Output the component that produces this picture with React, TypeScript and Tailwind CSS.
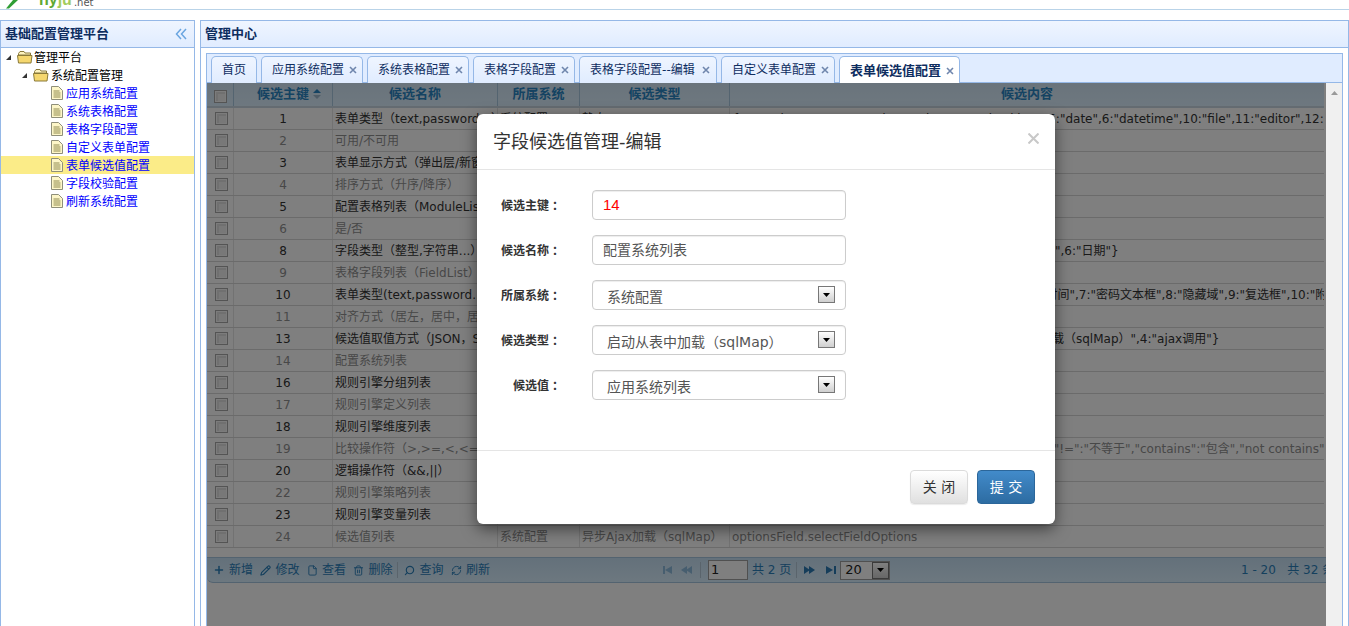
import { Plus, Pencil, File, Trash2, Search, RefreshCw } from "lucide-react";

type Row = { id: number; name: string; system?: string; type?: string; content?: string };

const rows: Row[] = [
  { id: 1, name: "表单类型（text,password...）", system: "系统配置", type: "静态JSON", content: '{1:"textbox",2:"password",3:"select2",4:"checkbox",5:"date",6:"datetime",10:"file",11:"editor",12:"auto"}' },
  { id: 2, name: "可用/不可用" },
  { id: 3, name: "表单显示方式（弹出层/新窗口）" },
  { id: 4, name: "排序方式（升序/降序）" },
  { id: 5, name: "配置表格列表（ModuleList）" },
  { id: 6, name: "是/否" },
  { id: 8, name: "字段类型（整型,字符串...）", content: '{1:"整型",2:"字符串",3:"长整型",4:"浮点型",5:"日期时间型",6:"日期"}' },
  { id: 9, name: "表格字段列表（FieldList）" },
  { id: 10, name: "表单类型(text,password...）", content: '{1:"文本框",2:"下拉框",3:"单选框",4:"日期",5:"日期",6:"时间",7:"密码文本框",8:"隐藏域",9:"复选框",10:"附件"}' },
  { id: 11, name: "对齐方式（居左，居中，居右）" },
  { id: 13, name: "候选值取值方式（JSON，SqlMap）", content: '{1:"JSON",2:"启动从表中加载（sqlMap）",3:"异步Ajax加载（sqlMap）",4:"ajax调用"}' },
  { id: 14, name: "配置系统列表" },
  { id: 16, name: "规则引擎分组列表" },
  { id: 17, name: "规则引擎定义列表" },
  { id: 18, name: "规则引擎维度列表" },
  { id: 19, name: "比较操作符（>,>=,<,<=...）", content: '{">":"大于等于","<":"小于","<=":"小于等于","=":"等于","!=":"不等于","contains":"包含","not contains":"不包含"}' },
  { id: 20, name: "逻辑操作符（&&,||）" },
  { id: 22, name: "规则引擎策略列表" },
  { id: 23, name: "规则引擎变量列表" },
  { id: 24, name: "候选值列表", system: "系统配置", type: "异步Ajax加载（sqlMap）", content: "optionsField.selectFieldOptions" },
];

const tabs = ["应用系统配置", "系统表格配置", "表格字段配置", "表格字段配置--编辑", "自定义表单配置"];
const leaves = ["应用系统配置", "系统表格配置", "表格字段配置", "自定义表单配置", "表单候选值配置", "字段校验配置", "刷新系统配置"];

function TreeArrow() {
  return (
    <svg width="7" height="7" viewBox="0 0 7 7" className="shrink-0">
      <path d="M6 1v5H1z" fill="#333" />
    </svg>
  );
}

function FolderIcon() {
  return (
    <svg width="16" height="14" viewBox="0 0 16 14" className="shrink-0">
      <path d="M1.5 3.5 3 1.5h4l1 1.5h5.5v2h-12z" fill="#fdf3c0" stroke="#8a7a3a" />
      <path d="M.5 5.5h14.5l-1 7.5H1.5z" fill="#f5d76e" stroke="#8a7a3a" />
    </svg>
  );
}

function LeafIcon() {
  return (
    <svg width="12" height="14" viewBox="0 0 12 14" className="shrink-0">
      <path d="M.5.5h7l4 4v9H.5z" fill="#fdf6c8" stroke="#8f8f7a" />
      <path d="M2.5 5h6M2.5 7h7M2.5 9h7M2.5 11h7" stroke="#8f8a50" />
    </svg>
  );
}

function Close({ className }: { className: string }) {
  return (
    <svg width="8" height="8" viewBox="0 0 8 8" className={className}>
      <path d="M1 1l6 6M7 1 1 7" stroke="#6f86ad" strokeWidth="1.6" />
    </svg>
  );
}

function Check({ className }: { className: string }) {
  return <span className={`block w-[13px] h-[13px] border border-[#a8a8a8] shadow-[inset_0_0_0_1px_#f8f8f8,inset_1px_1px_0_2px_#e0e0e0] bg-[#f0f0f0] ${className}`} />;
}

function ToolButton({ icon, label }: { icon: React.ReactNode; label: string }) {
  return (
    <span className="flex items-center gap-[3px]">
      <span className="w-[14px] flex justify-center">{icon}</span>
      {label}
    </span>
  );
}

function PageArrow({ d, muted }: { d: string; muted?: boolean }) {
  return (
    <svg width="11" height="8" viewBox="0 0 11 8" className={muted ? "opacity-40" : ""}>
      <path d={d} fill="#2b7ab5" />
    </svg>
  );
}

function SelectArrow({ className }: { className: string }) {
  return (
    <span className={`flex items-center justify-center w-[17px] h-[17px] border border-[#777] bg-gradient-to-b from-white to-[#cfcfcf] ${className}`}>
      <svg width="7" height="4" viewBox="0 0 7 4">
        <path d="M0 0h7L3.500 4z" fill="#000" />
      </svg>
    </span>
  );
}

function FormRow({ label, children }: { label: string; children: React.ReactNode }) {
  return (
    <div className="flex items-center h-[30px] mb-[15px]">
      <label className="w-[87px] pt-[1px] text-right text-[12px] font-bold text-[#333]">
        {label}
        <span className="ml-[3px]">：</span>
      </label>
      <div className="relative ml-[28px] w-[254px] h-[30px] flex items-center rounded-[4px] border border-[#ccc] shadow-[inset_0_1px_1px_rgba(0,0,0,.075)] text-[14px] text-[#555]">
        {children}
      </div>
    </div>
  );
}

function SelectField({ value }: { value: string }) {
  return (
    <>
      <span className="pl-[14px] pt-[5px]">{value}</span>
      <SelectArrow className="absolute right-[10px] top-[5px]" />
    </>
  );
}

export default function App() {
  return (
    <div className="w-[1349px] h-[626px] overflow-hidden bg-white font-['DejaVu_Sans','Noto_Sans_CJK_SC',sans-serif] text-[12px]">
      {/* brand strip, cut off by the window top */}
      <header className="h-[10px] overflow-hidden border-b border-[#b9d3e8]">
        <div className="flex items-end h-[9px] pl-[5px]">
          <svg width="22" height="9" viewBox="0 0 22 9" className="shrink-0">
            <path d="M1 8.500h3L13 0H8z" fill="#2f9e35" />
          </svg>
          <span className="ml-[12px] mb-[1px] text-[16px] leading-[16px] font-bold font-['Liberation_Sans',sans-serif]">
            <span className="text-[#5fa832]">ny</span>
            <span className="text-[#a3cc5e]">ju</span>
          </span>
          <span className="ml-[2px] mb-[1px] text-[10px] leading-[10px] text-[#555]">.net</span>
        </div>
      </header>

      <div className="flex pt-[10px]">
        {/* navigation panel */}
        <aside className="w-[195px] h-[640px] shrink-0 border border-[#95b8e7]">
          <div className="h-[27px] flex items-center justify-between pl-[4px] pr-[7px] border-b border-[#95b8e7] bg-gradient-to-b from-[#eff5ff] to-[#e0ecff]">
            <span className="text-[13px] font-bold text-[#0e2d5f]">基础配置管理平台</span>
            <svg width="12" height="12" viewBox="0 0 12 12">
              <path d="M6 1 1.500 6 6 11M11 1 6.500 6l4.500 5" fill="none" stroke="#6aa5e0" strokeWidth="1.500" />
            </svg>
          </div>
          <div className="h-[18px] flex items-center pl-[4px] text-black">
            <TreeArrow />
            <span className="ml-[5px]"><FolderIcon /></span>
            <span className="ml-[1px] pt-[1px]">管理平台</span>
          </div>
          <div className="h-[18px] flex items-center pl-[20px] text-black">
            <TreeArrow />
            <span className="ml-[5px]"><FolderIcon /></span>
            <span className="ml-[2px] pt-[1px]">系统配置管理</span>
          </div>
          {leaves.map((leaf, i) => (
            <div key={leaf} className={`h-[18px] flex items-center pl-[50px] text-[#0000ff] ${i === 4 ? "bg-[#fbec88]" : ""}`}>
              <LeafIcon />
              <span className="ml-[3px] pt-[1px]">{leaf}</span>
            </div>
          ))}
        </aside>

        {/* management centre */}
        <main className="ml-[5px] w-[1149px] h-[640px] shrink-0 border border-[#95b8e7]">
          <div className="h-[27px] flex items-center pl-[4px] border-b border-[#95b8e7] bg-gradient-to-b from-[#eff5ff] to-[#e0ecff]">
            <span className="text-[13px] font-bold text-[#0e2d5f]">管理中心</span>
          </div>
          <div className="p-[5px]">
            <div className="border border-[#95b8e7]">
              <div className="h-[29px] pl-[4px] pt-[2px] flex gap-[4px] bg-[#e0ecff] border-b border-[#95b8e7]">
                <div className="w-[46px] h-[27px] flex items-center justify-center rounded-t-[5px] border border-b-0 border-[#95b8e7] bg-gradient-to-b from-[#eff5ff] to-[#e0ecff] text-[#0e2d5f]">首页</div>
                {tabs.map((t, i) => (
                  <div key={t} className={`h-[27px] flex items-center justify-between pl-[10px] rounded-t-[5px] border border-b-0 border-[#95b8e7] bg-gradient-to-b from-[#eff5ff] to-[#e0ecff] text-[#0e2d5f] ${i === 3 ? "w-[138px] pr-[6px]" : "gap-[5px] pr-[5px]"}`}>
                    <span>{t}</span>
                    <Close className="" />
                  </div>
                ))}
                <div className="h-[28px] flex items-center pl-[10px] pr-[5px] rounded-t-[5px] border border-b-0 border-[#95b8e7] bg-white text-[13px] font-bold text-[#0e2d5f]">
                  <span>表单候选值配置</span>
                  <Close className="ml-[5px]" />
                </div>
              </div>

              <div className="flex h-[560px]">
                {/* framed page with its modal */}
                <div className="relative w-[1119px] shrink-0 overflow-hidden bg-white">
                  <div className="w-[1117px] h-[25px] flex border-b-2 border-[#c8d6e2] bg-gradient-to-b from-[#d4e8f8] to-[#dcf0ff] text-[13px] font-bold text-[#2a86c4]">
                    <div className="w-[27px] flex items-center justify-center border-r border-[#a8c8e0]"><Check className="mt-[4px]" /></div>
                    <div className="w-[99px] pl-[12px] pb-[1px] flex items-center justify-center gap-[4px] border-r border-[#a8c8e0]">
                      候选主键
                      <svg width="8" height="10" viewBox="0 0 8 10">
                        <path d="M4 0 8 4H0z" fill="#2a86c4" />
                        <path d="M0 6h8L4 10z" fill="#9fb8cc" />
                      </svg>
                    </div>
                    <div className="w-[165px] pb-[1px] flex items-center justify-center border-r border-[#a8c8e0]">候选名称</div>
                    <div className="w-[82px] pb-[1px] flex items-center justify-center border-r border-[#a8c8e0]">所属系统</div>
                    <div className="w-[150px] pb-[1px] flex items-center justify-center border-r border-[#a8c8e0]">候选类型</div>
                    <div className="w-[594px] pb-[1px] flex items-center justify-center">候选内容</div>
                  </div>
                  {rows.map((r, i) => (
                    <div key={r.id} className={`w-[1117px] h-[22px] flex items-center border-b border-[#d6d6d6] whitespace-nowrap ${i % 2 === 0 ? "text-[#333]" : "text-[#909090]"}`}>
                      <div className="w-[27px] h-full flex items-center pl-[8px] border-r border-[#e4e4e4]"><Check className="" /></div>
                      <div className="w-[99px] h-full pt-[1px] flex items-center justify-center border-r border-[#e4e4e4]">{r.id}</div>
                      <div className="w-[165px] h-full pt-[1px] flex items-center pl-[2px] overflow-hidden border-r border-[#e4e4e4]">{r.name}</div>
                      <div className="w-[82px] h-full pt-[1px] flex items-center pl-[2px] overflow-hidden border-r border-[#e4e4e4]">{r.system}</div>
                      <div className="w-[150px] h-full pt-[1px] flex items-center pl-[2px] overflow-hidden border-r border-[#e4e4e4]">{r.type}</div>
                      <div className="w-[594px] h-full pt-[1px] flex items-center pl-[2px] overflow-hidden">{r.content}</div>
                    </div>
                  ))}
                  {/* pagination toolbar */}
                  <div className="mt-[9px] h-[26px] flex items-center justify-between border-t border-b border-[#a6c6e0] rounded-bl-[6px] bg-gradient-to-b from-[#c8e2f6] to-[#daf0ff] text-[#2b80bb] whitespace-nowrap overflow-hidden">
                    <div className="flex items-center pl-[5px] gap-[5.5px] w-[455px] shrink-0">
                      <ToolButton icon={<Plus size={12} strokeWidth={3} />} label="新增" />
                      <ToolButton icon={<Pencil size={11} strokeWidth={2.500} />} label="修改" />
                      <ToolButton icon={<File size={11} strokeWidth={2} />} label="查看" />
                      <ToolButton icon={<Trash2 size={11} strokeWidth={2} />} label="删除" />
                      <span className="w-[1px] h-[16px] -mx-[1px] bg-[#b4c8d8]" />
                      <ToolButton icon={<Search size={11} strokeWidth={2.500} className="-scale-x-100" />} label="查询" />
                      <ToolButton icon={<RefreshCw size={11} strokeWidth={2} />} label="刷新" />
                    </div>
                    <div className="flex items-center flex-1">
                      <PageArrow muted d="M1 0h2v8H1zM10 0v8L3 4z" />
                      <span className="ml-[8px]"><PageArrow muted d="M6 0v8L0 4zM11 0v8L5 4z" /></span>
                      <span className="ml-[8px] w-[1px] h-[16px] bg-[#b4c8d8]" />
                      <span className="ml-[7px] w-[40px] h-[20px] pl-[2px] flex items-center bg-white border border-[#a0a0a0] text-[13px] text-[#222]">1</span>
                      <span className="ml-[4px]">共 2 页</span>
                      <span className="ml-[5px] w-[1px] h-[16px] bg-[#b4c8d8]" />
                      <span className="ml-[7px]"><PageArrow d="M0 0l6 4-6 4zM5 0l6 4-6 4z" /></span>
                      <span className="ml-[11px]"><PageArrow d="M0 0l7 4-7 4zM8 0h2v8H8z" /></span>
                      <span className="ml-[3px] w-[50px] h-[19px] flex items-center justify-between pl-[4px] bg-white border border-[#a0a0a0] text-[13px] text-[#222]">
                        20
                        <SelectArrow className="" />
                      </span>
                    </div>
                    <div className="w-[85px] overflow-hidden shrink-0">1 - 20 &nbsp; 共 32 条</div>
                  </div>

                  {/* modal backdrop */}
                  <div className="absolute inset-0 bg-black/50" />

                  {/* edit dialog */}
                  <div className="absolute left-[270px] top-[31px] w-[578px] h-[410px] bg-white rounded-[6px] shadow-[0_5px_15px_rgba(0,0,0,.5)]">
                    <div className="h-[56px] flex items-center justify-between pl-[16px] pr-[16px] border-b border-[#e5e5e5]">
                      <span className="text-[18px] text-[#333] -mt-[1px]">字段候选值管理-编辑</span>
                      <svg width="11" height="11" viewBox="0 0 11 11" className="-mt-[6px]">
                        <path d="M.5.5l10 10M10.500.5l-10 10" stroke="#c8c8c8" strokeWidth="2" />
                      </svg>
                    </div>
                    <div className="h-[281px] pt-[20px] border-b border-[#e5e5e5]">
                      <FormRow label="候选主键"><span className="pl-[10px] pt-[1px] text-[15px] font-['Liberation_Sans',sans-serif] text-[#ff0000]">14</span></FormRow>
                      <FormRow label="候选名称"><span className="pl-[10px] pt-[1px]">配置系统列表</span></FormRow>
                      <FormRow label="所属系统"><SelectField value="系统配置" /></FormRow>
                      <FormRow label="候选类型"><SelectField value="启动从表中加载（sqlMap）" /></FormRow>
                      <FormRow label="候选值"><SelectField value="应用系统列表" /></FormRow>
                    </div>
                    <div className="flex justify-end gap-[9px] pt-[19px] pr-[20px]">
                      <button className="w-[58px] h-[34px] rounded-[4px] border border-[#dbdbdb] bg-gradient-to-b from-white to-[#e0e0e0] text-[14px] text-[#333] shadow-[0_1px_1px_rgba(0,0,0,.08)]">关 闭</button>
                      <button className="w-[58px] h-[34px] rounded-[4px] border border-[#2b669a] bg-gradient-to-b from-[#428bca] to-[#2d6ca2] text-[14px] text-white">提 交</button>
                    </div>
                  </div>
                </div>

                {/* frame scrollbar */}
                <div className="w-[16px] shrink-0 bg-[#f0f0f0] flex justify-center pt-[8px]">
                  <svg width="7" height="4" viewBox="0 0 7 4">
                    <path d="M3.500 0 7 4H0z" fill="#9a9a9a" />
                  </svg>
                </div>
              </div>
            </div>
          </div>
        </main>
      </div>
    </div>
  );
}
